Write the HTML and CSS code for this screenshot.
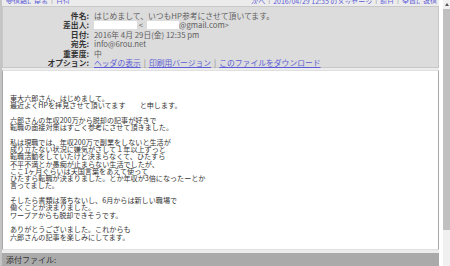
FILE: index.html
```html
<!DOCTYPE html>
<html lang="ja">

<head>
    <meta charset="UTF-8">
    <meta name="viewport" content="width=device-width, initial-scale=1.0">
    <title>メッセージ</title>
    <link rel="stylesheet" href="styles.css">
</head>

<body>
    <div class="frame">
        <div class="mail">
            <div class="mail__nav">
                <div class="mail__nav-group">
                    <a href="#">受信箱に戻る</a><span class="sep">|</span><a href="#">日付</a>
                </div>
                <div class="mail__nav-group">
                    <a href="#">次へ</a><span class="sep">|</span><a href="#">2016/04/29 12:35 のメッセージ</a><span class="sep">|</span><a href="#">前日</a><span class="sep">|</span><a href="#">全員に返信</a>
                </div>
            </div>

            <div class="mail__head">
                <div class="mail__label">件名:</div>
                <div class="mail__value">はじめまして、いつもHP参考にさせて頂いてます。</div>

                <div class="mail__label">差出人:</div>
                <div class="mail__value"><span class="mask mask--name"></span> &lt;<span class="mask mask--addr"></span>@gmail.com&gt;</div>

                <div class="mail__label">日付:</div>
                <div class="mail__value">2016年 4月 29日(金) 12:35 pm</div>

                <div class="mail__label">宛先:</div>
                <div class="mail__value">info@6rou.net</div>

                <div class="mail__label">重要度:</div>
                <div class="mail__value">中</div>

                <div class="mail__label">オプション:</div>
                <div class="mail__value">
                    <a href="#">ヘッダの表示</a><span class="sep">|</span><a href="#">印刷用バージョン</a><span class="sep">|</span><a href="#">このファイルをダウンロード</a>
                </div>
            </div>

            <div class="mail__body">
                <p>東大六郎さん、はじめまして。<br>最近よくHPを拝見させて頂いてます　　と申します。</p>
                <p>六郎さんの年収200万から脱却の記事が好きで<br>転職の面接対策はすごく参考にさせて頂きました。</p>
                <p>私は現職では、年収200万で副業をしないと生活が<br>成り立たない状況に嫌気がさして１年以上ずっと<br>転職活動をしていたけど決まらなくて、ひたすら<br>不平不満とか愚痴が止まらない生活でしたが、<br>ここ1ヶ月ぐらいは天国言葉をあえて使って<br>ひたすら転職が決まりました。とか年収が3倍になったーとか<br>言ってました。</p>
                <p>そしたら書類は落ちないし、6月からは新しい職場で<br>働くことが決まりました。<br>ワープアからも脱却できそうです。</p>
                <p>ありがとうございました。これからも<br>六郎さんの記事を楽しみにしてます。</p>
            </div>

            <div class="mail__attach">添付ファイル:</div>
        </div>

        <div class="scroll">
            <span class="scroll__arrow"></span>
            <div class="scroll__thumb"></div>
        </div>
    </div>
</body>

</html>
```

FILE: styles.css
```css
* {
    box-sizing: border-box;
}

body {
    margin: 0;
    background-color: #fff;
    font-family: "Noto Sans CJK JP", "Noto Sans", sans-serif;
    color: #333;
}

a {
    color: #5c5cd6;
}

.sep {
    color: #888;
    margin: 0 3px;
}

.frame {
    display: flex;
    height: 266px;
    overflow: hidden;
}

.mail {
    width: 439px;
    display: flex;
    flex-direction: column;
    gap: 2px;
    background-color: #ececec;
    border-left: 2px solid #c4c4c4;
}

/* top links, only their lower edge is on screen */
.mail__nav {
    height: 4px;
    display: flex;
    justify-content: space-between;
    align-items: flex-end;
    overflow: hidden;
    padding: 0 2px 0 4px;
    font-size: 7px;
    line-height: 9px;
}

.mail__nav-group {
    margin-bottom: -2px;
}

.mail__head {
    display: grid;
    grid-template-columns: 86px 1fr;
    column-gap: 5px;
    height: 62px;
    padding-top: 4px;
    background-color: #dcdcdc;
    border: 1px solid #c8c8c8;
    font-size: 7.8px;
    line-height: 9.4px;
}

.mail__label {
    text-align: right;
    font-weight: bold;
    color: #333;
}

.mail__value {
    color: #606060;
    white-space: nowrap;
}

.mail__value a {
    color: #5c5cd6;
}

.mask {
    display: inline-block;
    height: 8px;
    background-color: #fff;
    vertical-align: -1px;
}

.mask--name {
    width: 43px;
}

.mask--addr {
    width: 32px;
    margin-left: 4px;
}

.mail__body {
    height: 185px;
    padding: 24px 7px 0;
    background-color: #fff;
    border: 1px solid #e0e0e0;
    border-left-color: #a8a8a8;
    border-right-color: #a8a8a8;
    font-size: 7.1px;
    line-height: 7.3px;
    color: #333;
}

.mail__body p {
    margin: 0 0 7.3px;
}

.mail__attach {
    flex: 1;
    margin-top: 1px;
    padding: 2px 4px;
    background-color: #aaa;
    font-size: 8px;
    line-height: 9px;
    color: #333;
}

.scroll {
    width: 7px;
    margin-left: 4px;
    display: flex;
    flex-direction: column;
    align-items: center;
    background-color: #f0f0f0;
}

.scroll__arrow {
    margin: 3px 0 3px;
    border: 2px solid transparent;
    border-top: 0;
    border-bottom: 3px solid #555;
}

.scroll__thumb {
    width: 100%;
    height: 221px;
    background-color: #c0c0c0;
}
```
